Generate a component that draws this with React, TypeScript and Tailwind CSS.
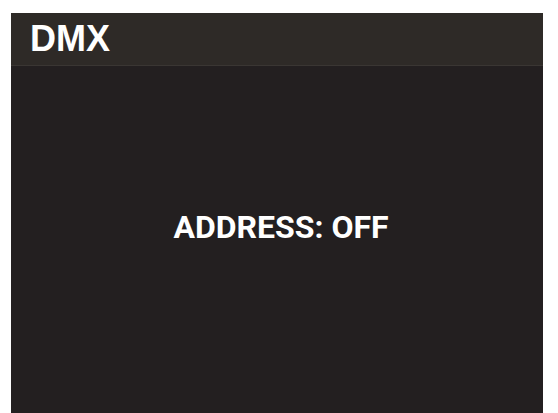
import React from 'react';

// Single DMX settings panel, partially cropped at the bottom edge
export default function App() {
  return (
    <div className="h-[413px] w-[558px] overflow-hidden bg-white pt-[13px] pl-[11px] pr-[15px]">
      <div className="flex h-[420px] flex-col bg-[#231f20]">
        {/* Header */}
        <div className="flex h-[53px] items-center border-b border-[#3a3633] bg-[#2e2a27] pl-[19px]">
          <span className="text-[36px] font-bold leading-none text-white [font-family:'Liberation_Sans',Arial,sans-serif]">
            DMX
          </span>
        </div>

        {/* Body */}
        <div className="flex flex-1 justify-center pt-[145px] pl-[8px]">
          <span className="text-[32px] font-bold leading-none text-white [font-family:Roboto,'Liberation_Sans',sans-serif]">
            ADDRESS: OFF
          </span>
        </div>
      </div>
    </div>
  );
}
